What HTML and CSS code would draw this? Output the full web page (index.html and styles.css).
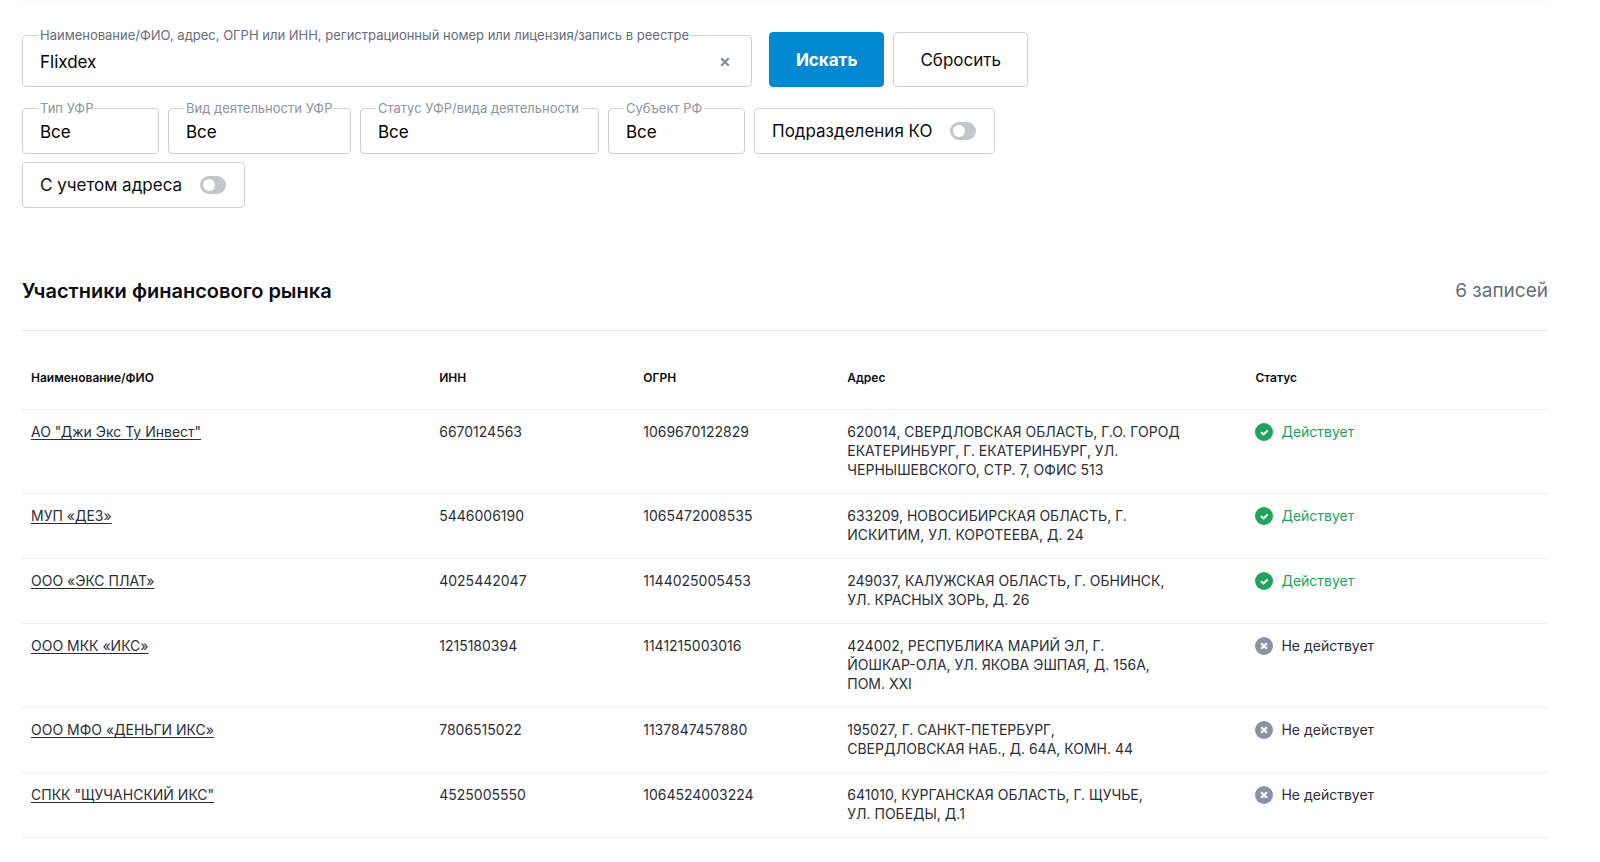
FILE: index.html
```html
<!DOCTYPE html>
<html lang="ru">
<head>
<meta charset="utf-8">
<title>Участники финансового рынка</title>
<link rel="stylesheet" href="styles.css">
</head>
<body>
<svg class="sprite" aria-hidden="true">
  <symbol id="icon-ok" viewBox="0 0 18 18">
    <circle cx="9" cy="9" r="9" fill="#21a35b"/>
    <path d="M5.9 9.2l2.6 2.2 4.2-4" fill="none" stroke="#fff" stroke-width="2.1"/>
  </symbol>
  <symbol id="icon-off" viewBox="0 0 18 18">
    <circle cx="9" cy="9" r="9" fill="#8b92a1"/>
    <path d="M6.2 6.2l5.6 5.6M11.8 6.2l-5.6 5.6" fill="none" stroke="#fff" stroke-width="2.3"/>
  </symbol>
</svg>
<main class="page">
  <form class="search">
    <div class="search-row">
      <fieldset class="field field-search">
        <legend class="field-title"><label for="query">Наименование/ФИО, адрес, ОГРН или ИНН, регистрационный номер или лицензия/запись в реестре</label></legend>
        <div class="query">
          <input class="control" id="query" type="text" value="Flixdex">
          <button class="clear" type="button" aria-label="Очистить">
            <svg width="10" height="10" viewBox="0 0 10 10"><path d="M1.2 1.2l7.6 7.6M8.8 1.2l-7.6 7.6" stroke="#858c9b" stroke-width="2.2"/></svg>
          </button>
        </div>
      </fieldset>
      <div class="actions">
        <button class="btn btn-primary" type="button">Искать</button>
        <button class="btn" type="button">Сбросить</button>
      </div>
    </div>
    <div class="filters">
      <fieldset class="field field-s">
        <legend class="field-title"><label for="type">Тип УФР</label></legend>
        <select class="control" id="type"><option>Все</option></select>
      </fieldset>
      <fieldset class="field field-m">
        <legend class="field-title"><label for="kind">Вид деятельности УФР</label></legend>
        <select class="control" id="kind"><option>Все</option></select>
      </fieldset>
      <fieldset class="field field-l">
        <legend class="field-title"><label for="status">Статус УФР/вида деятельности</label></legend>
        <select class="control" id="status"><option>Все</option></select>
      </fieldset>
      <fieldset class="field field-s">
        <legend class="field-title"><label for="region">Субъект РФ</label></legend>
        <select class="control" id="region"><option>Все</option></select>
      </fieldset>
      <label class="toggle">Подразделения КО<input class="switch" type="checkbox" role="switch"></label>
      <label class="toggle">С учетом адреса<input class="switch" type="checkbox" role="switch"></label>
    </div>
  </form>

  <section>
    <header class="results-head">
      <h2 class="results-title">Участники финансового рынка</h2>
      <span class="results-count">6 записей</span>
    </header>
    <table class="results">
      <colgroup><col class="col-wide"><col class="col-code"><col class="col-code"><col class="col-wide"><col></colgroup>
      <thead>
        <tr><th>Наименование/ФИО</th><th>ИНН</th><th>ОГРН</th><th>Адрес</th><th>Статус</th></tr>
      </thead>
      <tbody>
        <tr>
          <td><a href="#">АО "Джи Экс Ту Инвест"</a></td><td>6670124563</td><td>1069670122829</td>
          <td>620014, СВЕРДЛОВСКАЯ ОБЛАСТЬ, Г.О. ГОРОД<br>ЕКАТЕРИНБУРГ, Г. ЕКАТЕРИНБУРГ, УЛ.<br>ЧЕРНЫШЕВСКОГО, СТР. 7, ОФИС 513</td>
          <td><span class="status status-ok"><svg class="status-icon"><use href="#icon-ok"/></svg>Действует</span></td>
        </tr>
        <tr>
          <td><a href="#">МУП «ДЕЗ»</a></td><td>5446006190</td><td>1065472008535</td>
          <td>633209, НОВОСИБИРСКАЯ ОБЛАСТЬ, Г.<br>ИСКИТИМ, УЛ. КОРОТЕЕВА, Д. 24</td>
          <td><span class="status status-ok"><svg class="status-icon"><use href="#icon-ok"/></svg>Действует</span></td>
        </tr>
        <tr>
          <td><a href="#">ООО «ЭКС ПЛАТ»</a></td><td>4025442047</td><td>1144025005453</td>
          <td>249037, КАЛУЖСКАЯ ОБЛАСТЬ, Г. ОБНИНСК,<br>УЛ. КРАСНЫХ ЗОРЬ, Д. 26</td>
          <td><span class="status status-ok"><svg class="status-icon"><use href="#icon-ok"/></svg>Действует</span></td>
        </tr>
        <tr>
          <td><a href="#">ООО МКК «ИКС»</a></td><td>1215180394</td><td>1141215003016</td>
          <td>424002, РЕСПУБЛИКА МАРИЙ ЭЛ, Г.<br>ЙОШКАР-ОЛА, УЛ. ЯКОВА ЭШПАЯ, Д. 156А,<br>ПОМ. XXI</td>
          <td><span class="status"><svg class="status-icon"><use href="#icon-off"/></svg>Не действует</span></td>
        </tr>
        <tr>
          <td><a href="#">ООО МФО «ДЕНЬГИ ИКС»</a></td><td>7806515022</td><td>1137847457880</td>
          <td>195027, Г. САНКТ-ПЕТЕРБУРГ,<br>СВЕРДЛОВСКАЯ НАБ., Д. 64А, КОМН. 44</td>
          <td><span class="status"><svg class="status-icon"><use href="#icon-off"/></svg>Не действует</span></td>
        </tr>
        <tr>
          <td><a href="#">СПКК "ЩУЧАНСКИЙ ИКС"</a></td><td>4525005550</td><td>1064524003224</td>
          <td>641010, КУРГАНСКАЯ ОБЛАСТЬ, Г. ЩУЧЬЕ,<br>УЛ. ПОБЕДЫ, Д.1</td>
          <td><span class="status"><svg class="status-icon"><use href="#icon-off"/></svg>Не действует</span></td>
        </tr>
      </tbody>
    </table>
  </section>
</main>
</body>
</html>
```
FILE: styles.css
```css
* {
  box-sizing: border-box;
}

body {
  margin: 0;
  background: #fff;
  color: #0c0d10;
  font-family: Inter, "Liberation Sans", sans-serif;
}

.sprite {
  display: none;
}

.page {
  margin: 2px 52px 0 22px;
  border-top: 1px solid #f6f6f7;
}

.search {
  max-width: 1006px;
  padding-top: 24px;
}

.search-row {
  display: flex;
  align-items: flex-end;
  gap: 17px;
}

.field {
  min-width: 0;
  margin: 0;
  padding: 0 16px 5px 15px;
  border: 1px solid #cfd1d6;
  border-radius: 4px;
}

.field-search {
  flex: 1;
  padding-bottom: 5px;
}

.field-s {
  width: 137px;
}

.field-m {
  width: 183px;
}

.field-l {
  width: 239px;
}

.field-title {
  padding: 0 2px;
  color: #8e939d;
  font-size: 13px;
  line-height: 16px;
  white-space: nowrap;
}

.field-search .field-title {
  color: #666c7a;
}

.control {
  display: block;
  width: 100%;
  height: 32px;
  padding: 0 0 0 2px;
  border: 0;
  outline: 0;
  appearance: none;
  background: transparent;
  color: #000;
  font: 17px Inter, "Liberation Sans", sans-serif;
}

.query {
  display: flex;
  align-items: center;
}

.query .control {
  flex: 1;
  height: 38px;
}

.clear {
  display: flex;
  padding: 5px;
  border: 0;
  background: transparent;
}

.actions {
  display: flex;
  gap: 9px;
}

.btn {
  height: 55px;
  padding: 0 26px;
  border: 1px solid #cfd1d6;
  border-radius: 4px;
  background: #fff;
  color: #0c0d10;
  font: 17px Inter, "Liberation Sans", sans-serif;
}

.btn-primary {
  border-color: #0088d0;
  background: #0088d0;
  color: #fff;
  font-weight: 700;
}

.filters {
  display: flex;
  flex-wrap: wrap;
  align-items: flex-end;
  gap: 8px 9px;
  margin-top: 13px;
}

.toggle {
  display: flex;
  align-items: center;
  gap: 18px;
  height: 46px;
  padding: 0 18px 0 17px;
  border: 1px solid #cfd1d6;
  border-radius: 4px;
  font-size: 17px;
}

.switch {
  display: flex;
  width: 26px;
  height: 18px;
  margin: 0;
  padding: 3px;
  border-radius: 9px;
  appearance: none;
  background: #c3c6cb;
}

.switch::before {
  content: "";
  width: 12px;
  height: 12px;
  border-radius: 50%;
  background: #fff;
}

.switch:checked {
  justify-content: flex-end;
  background: #0088d0;
}

.results-head {
  display: flex;
  align-items: center;
  justify-content: space-between;
  margin-top: 67px;
  padding-bottom: 23px;
  border-bottom: 1px solid #e4e5e7;
}

.results-title {
  margin: 0;
  font-size: 20px;
  font-weight: 600;
  line-height: 32px;
}

.results-count {
  color: #666c7a;
  font-size: 19px;
  line-height: 32px;
}

.results {
  width: 100%;
  border-collapse: separate;
  border-spacing: 0;
  table-layout: fixed;
  color: #2b2e36;
  font-size: 14px;
  line-height: 19px;
}

.col-wide {
  width: 26.75%;
}

.col-code {
  width: 13.37%;
}

.results th,
.results td {
  padding: 12px 0 14px 9px;
  border-bottom: 1px solid #ebecee;
  text-align: left;
  vertical-align: top;
}

.results th {
  padding: 37px 0 22px 9px;
  color: #0c0d10;
  font-size: 12px;
  font-weight: 600;
}

.results a {
  color: inherit;
  text-underline-offset: 2px;
}

.status {
  display: flex;
  align-items: center;
  gap: 8px;
}

.status-ok {
  color: #21a35b;
}

.status-icon {
  width: 18px;
  height: 18px;
}
```
